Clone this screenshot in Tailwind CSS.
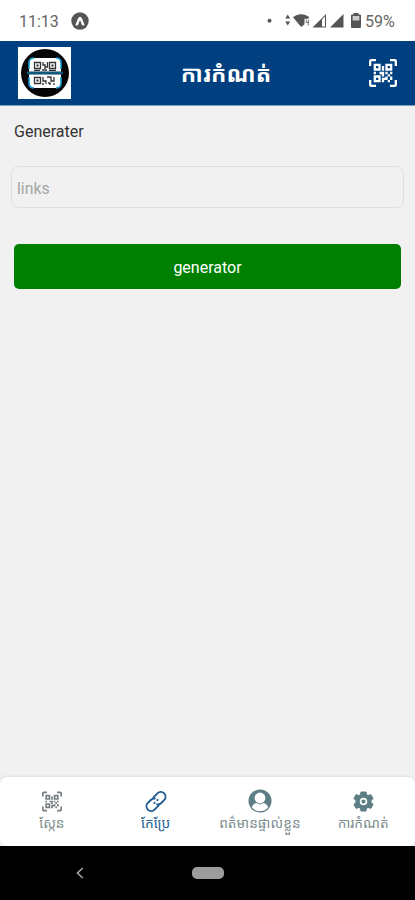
<!DOCTYPE html>
<html lang="km">
<head>
<meta charset="utf-8">
<title>QR Generator</title>
<script src="https://cdn.jsdelivr.net/npm/@tailwindcss/browser@4"></script>
</head>
<body class="w-[415px] h-[900px] overflow-hidden bg-black font-[Roboto,'Noto_Sans_Khmer','Noto_Sans',sans-serif]">
<svg class="hidden">
  <symbol id="qr" viewBox="0 0 24 24"><path fill="currentColor" d="M4,4H10V10H4V4M20,4V10H14V4H20M14,15H16V13H14V11H16V13H18V11H20V13H18V15H20V18H18V20H16V18H13V20H11V16H14V15M16,15V18H18V15H16M4,20V14H10V20H4M6,6V8H8V6H6M16,6V8H18V6H16M6,16V18H8V16H6M4,11H6V13H4V11M9,11H13V15H11V13H9V11M11,6H13V10H11V6M2,2V6H0V2A2,2 0 0,1 2,0H6V2H2M22,0A2,2 0 0,1 24,2V6H22V2H18V0H22M2,18V22H6V24H2A2,2 0 0,1 0,22V18H2M22,22V18H24V22A2,2 0 0,1 22,24H18V22H22Z"/></symbol>
</svg>
<div class="flex flex-col h-full">
  <div class="h-[41px] bg-white flex items-center pl-[19px] pr-[20px] text-[#666] shrink-0">
    <span class="text-[16px] leading-none w-[41px] pt-[2px]">11:13</span>
    <svg class="ml-[11px] w-[18px] h-[18px]" viewBox="0 0 18 18"><circle cx="9" cy="9" r="8.700" fill="#555"/><path d="M5.800 12.400C7.200 10.800 7.800 6 9 6s1.800 4.800 3.200 6.400" fill="none" stroke="#fff" stroke-width="2.400" stroke-linecap="round"/></svg>
    <svg class="ml-auto w-[96px] h-[18px]" viewBox="265 12 96 18" fill="#555">
      <circle cx="269.500" cy="20.800" r="2"/>
      <path d="M285.200 18.500l2.500-4 2.500 4zM285.200 21.500l2.500 4 2.500-4z"/>
      <path d="M293 17.200c4.800-4 11.500-4 16.300 0l-1.200 1.600h-3.600v5.500L301.200 27z"/>
      <path d="M306.300 19.500v3h2.700M308.300 19.500v6" fill="none" stroke="#777" stroke-width="1"/>
      <path fill-rule="evenodd" d="M326 14v13.500h-13.500zM322 19.500v7h3v-10z"/>
      <path d="M343.500 14v13.500H330z"/>
      <path d="M353.500 13h5v1.500h1.500a1 1 0 0 1 1 1V27a1 1 0 0 1-1 1h-8a1 1 0 0 1-1-1V15.500a1 1 0 0 1 1-1h1.500z"/>
      <path d="M352.600 16h6.800v4.500h-6.800z" fill="#ccc"/>
    </svg>
    <span class="text-[16px] leading-none w-[30px] ml-[4px] pt-[2px] whitespace-nowrap">59%</span>
  </div>
  <header class="h-[65px] bg-[#004080] border-b border-[#78a0c0] flex items-center justify-between pl-[18px] pr-[18px] shrink-0">
    <div class="w-[53px] h-[52px] bg-white flex items-center justify-center">
      <svg class="w-[50px] h-[50px]" viewBox="0 0 50 50">
        <circle cx="25" cy="25" r="24" fill="#050505"/>
        <rect x="9" y="10" width="32" height="30" rx="5" fill="#fff"/>
        <path d="M9 21v-6q0-5 5-5M41 21v-6q0-5-5-5M9 29v6q0 5 5 5M41 29v6q0 5-5 5" fill="none" stroke="#159bd3" stroke-width="1.600"/>
        <path d="M7 25h36" stroke="#063b52" stroke-width="3"/>
        <path d="M7 25h36" stroke="#117cad" stroke-width="1"/>
        <g fill="none" stroke="#333" stroke-width="1.300"><path d="M14.500 14.500h6v6h-6zM29.500 14.500h6v6h-6zM14.500 29.500h6v6h-6z"/><path d="M23 14v3h2v4M27.500 14v5h-2M22 22h5M14 22.300h6M29 22.300h7M23 29v4h3v3M27 29h4v4h3v-4M28 35h2v2M34 35v2M22 36h2"/></g>
        <path d="M16.500 16.500h2v2h-2zM31.500 16.500h2v2h-2zM16.500 31.500h2v2h-2z" fill="#222"/>
      </svg>
    </div>
    <h1 class="text-white font-bold text-[22.700px] leading-[30px] w-[92px] ml-[20px] pt-[3px] text-center whitespace-nowrap">ការកំណត់</h1>
    <svg class="w-[28px] h-[28px] text-white ml-[8px]"><use href="#qr"/></svg>
  </header>
  <main class="flex-1 bg-[#f1f1f1] flex flex-col">
    <p class="mt-[16px] ml-[14px] text-[16px] leading-[20px] text-[#333]">Generater</p>
    <div class="mt-[24px] mx-[11px] h-[42px] rounded-[8px] border-[1.500px] border-[#dfdfdf] pl-[5px] pt-[3px] flex items-center text-[15.800px] text-[#a5a5a5]">links</div>
    <button class="mt-[36px] mx-[14px] h-[45px] pt-[3px] rounded-[5px] bg-[#008000] text-white text-[16px]">generator</button>
  </main>
  <div class="bg-[#f1f1f1] shrink-0">
  <nav class="h-[69px] bg-white rounded-[7px] shadow-[0_-1px_3px_rgba(0,0,0,0.08)] grid grid-cols-4 text-[#7e8d90] text-[13.700px]">
    <div class="flex flex-col items-center pt-[14px]"><svg class="w-[20px] h-[21px] text-[#777f82]"><use href="#qr"/></svg><span class="mt-[2px] leading-[19px] whitespace-nowrap">ស្កែន</span></div>
    <div class="flex flex-col items-center pt-[14px] text-[#205c91]"><svg class="w-[22px] h-[21px] ml-[1px]" viewBox="1 1 22 22" fill="none" stroke="currentColor" stroke-width="2" stroke-linecap="round" stroke-linejoin="round"><path d="M13.200 15.200q2.300.2 4-1.400l3.300-3.300a4.800 4.800 0 0 0-7-7l-4.200 4.200"/><path d="M10.800 8.800q-2.300-.2-4 1.400l-3.300 3.300a4.800 4.800 0 0 0 7 7l4.200-4.200"/><path d="M10.300 13.700l.3-.3M13.400 10.600l.3-.3"/></svg><span class="mt-[2px] leading-[19px] whitespace-nowrap">កែប្រែ</span></div>
    <div class="flex flex-col items-center pt-[12px]"><svg class="w-[24px] h-[24px] ml-[1px]" viewBox="0 0 24 24"><circle cx="12" cy="12" r="11.500" fill="#5d7e85"/><circle cx="12" cy="9" r="5.400" fill="#fff"/><path d="M3.800 18.200q1.700-4 5-4.200Q12 16 15.200 14q3.300.2 5 4.200A10.200 10.200 0 0 1 3.800 18.200z" fill="#fff"/><path d="M8.800 14q3.200 2.200 6.400 0" fill="none" stroke="#8ba3a8" stroke-width="1"/></svg><span class="mt-[1px] ml-[1px] leading-[19px] whitespace-nowrap">ពត៌មានផ្ទាល់ខ្លួន</span></div>
    <div class="flex flex-col items-center pt-[14px]"><svg class="w-[21px] h-[21px] ml-[1px]" viewBox="0 0 21 21"><path fill="#5d7e85" stroke="#5d7e85" stroke-width="1" stroke-linejoin="round" d="M8 1h5l.6 2.800 1.500.8 2.700-1 2.300 4-2.100 1.900v2l2.100 1.900-2.300 4-2.700-1-1.500.8L13 20H8l-.6-2.800-1.500-.8-2.700 1-2.300-4L3 11.500v-2L.9 7.600l2.300-4 2.700 1 1.500-.8z"/><circle cx="10.500" cy="10.500" r="2.900" fill="#5d7e85" stroke="#fff" stroke-width="1.700"/></svg><span class="mt-[2px] leading-[19px] whitespace-nowrap">ការកំណត់</span></div>
  </nav>
  </div>
  <div class="h-[54px] bg-black flex items-center shrink-0">
    <svg class="ml-[76px] w-[8px] h-[12px]" viewBox="0 0 8 12"><path d="M6.800 1L1.500 6l5.300 5" fill="none" stroke="#a0a0a0" stroke-width="1.700"/></svg>
    <div class="ml-[108px] w-[32px] h-[12px] rounded-[5px] bg-[#9c9c9c]"></div>
  </div>
</div>
</body>
</html>
